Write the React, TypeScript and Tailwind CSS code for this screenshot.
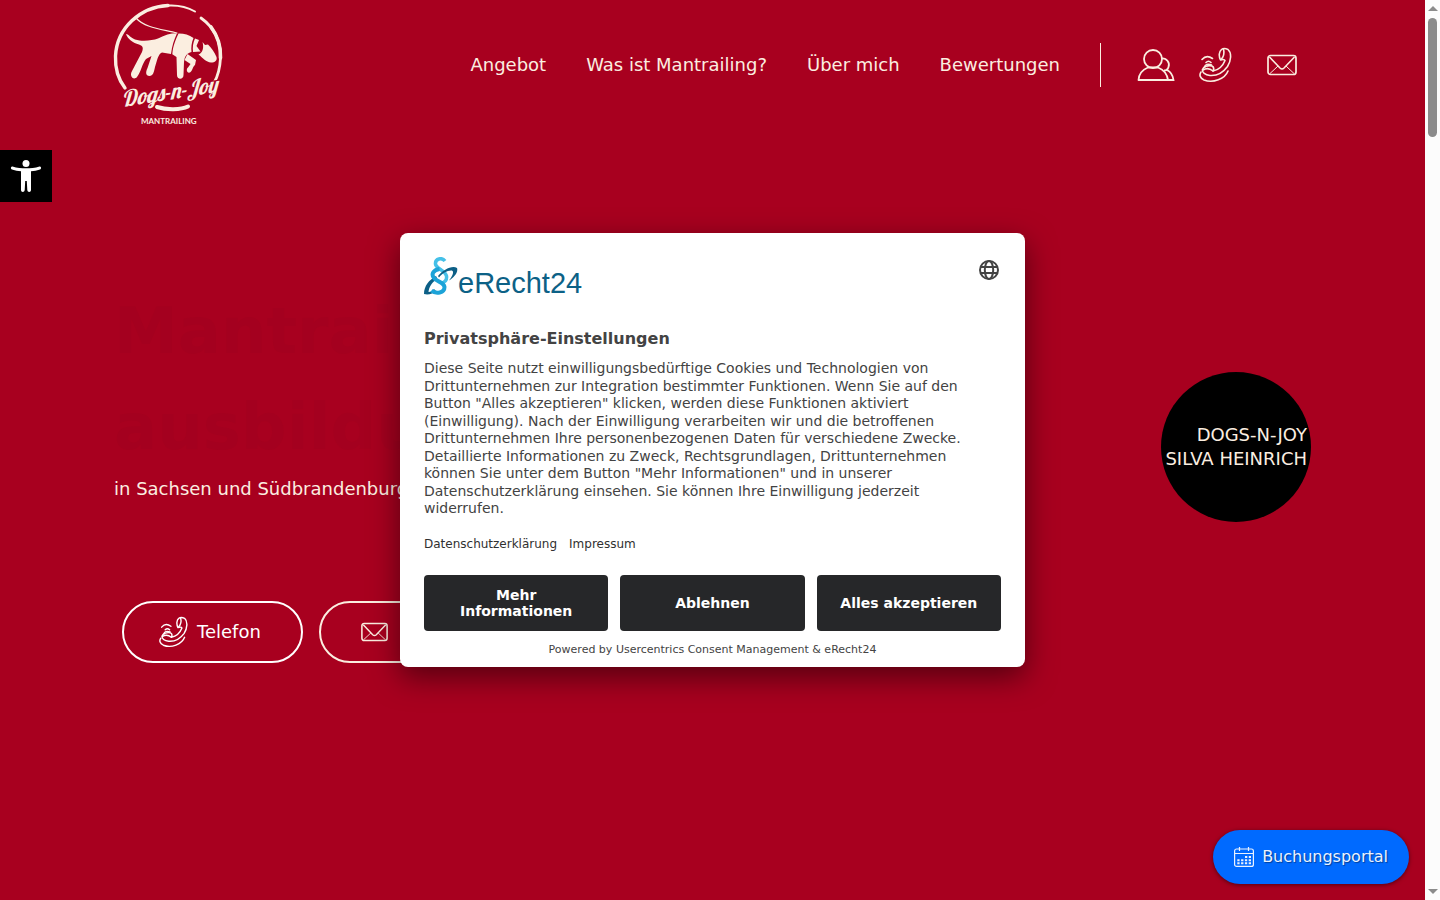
import React from 'react';

const navLinks = ['Angebot', 'Was ist Mantrailing?', 'Über mich', 'Bewertungen'];

const consentButtons = ['Mehr Informationen', 'Ablehnen', 'Alles akzeptieren'];

interface IconProps {
  className?: string;
}

const DogLogo: React.FC = () => (
  <svg viewBox="0 0 130 130" className="size-[130px] -ml-[10px]" role="img" aria-label="Dogs-n-Joy Mantrailing">
    <g fill="none" stroke="#fbeee0" strokeLinecap="round">
      <path d="M21 88C14 79 11 68 11.500 56C13 28 36 7 64 5.500" strokeWidth="3.400" />
      <path d="M64 5.500C75 4.800 84 7.500 91 11.500" strokeWidth="2" />
      <path d="M97 18C111 28 117 43 116.500 58C116 68 114 76 110 83" strokeWidth="2.800" />
      <path d="M107 27C113 35 117 46 116.500 58" strokeWidth="3.600" />
      <path d="M53 107C62 110 77 110 84 106.500" strokeWidth="4" />
      <path d="M32 18C41 28 57 29 73 33" strokeWidth="1.200" />
    </g>
    <g fill="#fbeee0">
      <path d="M22 34C25 34.500 27 38 31 39.500C39 42 48 40.500 54 38.500C61 35 66 33.300 73 33.300C70 40 68 46 67 54L58 52.500C54 54 53 61 51 67C50 72 49 76 45.500 76C41.500 76 41.500 72 43.500 68L47.500 56L42 59C38 64 37 72 33 77C30 80.500 25.500 77 27.500 72L38 52C40 47 38 45.500 35 44.500C29 43 23.500 39 22 34Z" />
      <path d="M74.500 33.600C80 33.500 85 35 89.500 38C87.500 43 87 47 87.500 52C83 53 80.500 56 80 62L79.500 75C79.500 80 73 80 73 75L72.500 57L68.300 54.300C69 46 71.500 40 74.500 33.600Z" />
      <path d="M91 38.500L95 40L92.500 46L96.500 51.500L89 52C88.500 47 89 43 91 38.500Z" />
      <path d="M83.500 54L92 60L91 65C88.500 67 88.500 71 86 72.500C82.500 73.500 82 69 84 67.500L86.500 64L80.500 60Z" />
      <path d="M98.500 42L101 45L104 44.500C107.500 48 110.500 52 112.500 57C113.500 60.500 111 62.500 107 62.500C102 62 99 58 94.500 54.500C99 53 100 47 98.500 42Z" />
    </g>
    <text
      x="19"
      y="107"
      transform="rotate(-9 19 107)"
      fill="#fbeee0"
      stroke="#a8001f"
      strokeWidth="2"
      paintOrder="stroke"
      className="font-['Brush_Script_MT','Lobster',cursive] text-[22px] italic"
    >
      Dogs-n-Joy
    </text>
    <text x="37" y="124" fill="#fbeee0" className="font-['Lato',sans-serif] text-[8px] font-bold">
      MANTRAILING
    </text>
  </svg>
);

const PersonIcon: React.FC<IconProps> = ({ className }) => (
  <svg viewBox="0 0 38 32" className={className} fill="none" stroke="currentColor" strokeWidth="1.800" aria-hidden="true">
    <circle cx="16" cy="10" r="9" />
    <path d="M1.500 31C2 24 6 20.500 11 18.500H21C26 20.500 30 24 31 31Z" strokeLinejoin="round" />
    <path d="M24.500 9.500C30 9 33 14 31.500 18C31 20 29 21.500 27 21.500M30 21C34 23 36 27 36.500 31H31" />
  </svg>
);

const PhoneIcon: React.FC<IconProps> = ({ className }) => (
  <svg
    viewBox="0 0 34 36"
    className={className}
    fill="none"
    stroke="currentColor"
    strokeWidth="1.600"
    strokeLinecap="round"
    strokeLinejoin="round"
    aria-hidden="true"
  >
    <path d="M21.500 13C19.500 9 20 4.500 22.500 2.500C24 1.300 27 1.500 29 2.500C33 6 32 14 28.500 19.500C24.500 25 18 29 11 28.500C6 28 3 25.500 3.500 22.500C4.500 19.500 9 18 13 19C15 20 15 22 14 24C19.500 23 24 18.500 26 13.500C25.500 12 23 12.500 21.500 13Z" />
    <path d="M22 12.500C24.500 10 25.500 6 24.500 2M4 23C7 21 11 21.500 14 24M5.500 20C6 17.500 9 16.500 12.500 18" />
    <path d="M2 25C0 28 1 31 5 33C14 36.500 26 32 29 24" />
    <path d="M3 12.500C6 9 10 9 13.500 11.500M7 15.500C8.500 14 10.500 14 12 15.500" />
  </svg>
);

const MailIcon: React.FC<IconProps> = ({ className }) => (
  <svg viewBox="0 0 30 22" className={className} fill="none" stroke="currentColor" strokeLinejoin="round" aria-hidden="true">
    <rect x="1" y="1.500" width="28" height="19" rx="2.500" strokeWidth="1.700" />
    <path d="M2.500 3L13 14C14.500 15.500 15.500 15.500 17 14L27.500 3" strokeWidth="1.600" />
    <path d="M3 19.500L11 12M27 19.500L19 12" strokeWidth="1" />
  </svg>
);

const AccessibilityIcon: React.FC = () => (
  <svg viewBox="0 0 32 34" className="h-[34px] w-8" fill="#fff" aria-hidden="true">
    <circle cx="16" cy="4.500" r="3.500" />
    <path d="M2.500 7.500C7 9 11.500 9.300 16 9.300S25 9 29.500 7.500C31.500 7.500 31.500 10 30 10.500C27 11.500 24 12 21 12.300V31C21 33.500 17.500 33.500 17.300 31L16.800 22H15.200L14.700 31C14.500 33.500 11 33.500 11 31V12.300C8 12 5 11.500 2 10.500C.5 10 .5 7.500 2.500 7.500Z" />
  </svg>
);

const GlobeIcon: React.FC = () => (
  <svg viewBox="0 0 24 24" className="size-6" fill="none" stroke="#434343" strokeWidth="2" aria-hidden="true">
    <circle cx="12" cy="12" r="9" />
    <ellipse cx="12" cy="12" rx="4.200" ry="9" />
    <path d="M4 9H20M4 15H20" />
  </svg>
);

const CalendarIcon: React.FC = () => (
  <svg viewBox="0 0 20 20" className="size-5" fill="none" stroke="currentColor" strokeWidth="1.200" aria-hidden="true">
    <rect x=".6" y="2" width="18.800" height="17.400" rx="2" />
    <path d="M.6 6.500H19.400M5.500 0V4M14.500 0V4" />
    <path d="M11 10H17M3.300 13.300H17M3.300 16.300H17" strokeWidth="2" strokeDasharray="2.300 1.500" />
  </svg>
);

const ERechtLogo: React.FC = () => (
  <div className="flex h-10 items-start">
    <svg viewBox="0 0 34 38" className="h-[38px] w-[34px]" fill="none" aria-hidden="true">
      <path d="M0 37C0 29 5 23 12 19L13.500 22C8 25 5 30 4.500 35C7 35 9 34 10 32L12 34C9 37 4 38 0 37Z" fill="#0c5f86" />
      <path d="M21 4C18 0 11 1.500 11.500 7C12 12 21 13 22.500 19C23 22.500 21 25 18 26" stroke="#45c0e8" strokeWidth="3.500" />
      <path d="M15.500 12C9 13 7 17.500 10 21C13 25 20 25 20.500 30C20.500 36 12 37.500 7.500 33.500" stroke="#1ca3d8" strokeWidth="4" />
      <path d="M14 19C19 13 28 8 33 11C34.500 15 30 20.500 25 23.500C30 17 30 13.500 27 13.500C23 13.500 18 16.500 15 20.500Z" fill="#0c5f86" />
    </svg>
    <span className="mt-3.5 font-['Liberation_Sans',sans-serif] text-[29px] leading-6 text-[#0c6186]">eRecht24</span>
  </div>
);

const ConsentDialog: React.FC = () => (
  <div
    role="dialog"
    aria-labelledby="consent-title"
    className="w-full max-w-[625px] rounded-lg bg-white px-6 pt-6 pb-[9px] text-[#303030] shadow-[0_10px_30px_rgba(0,0,0,0.5)]"
  >
    <div className="flex items-start justify-between">
      <ERechtLogo />
      <button type="button" aria-label="Sprache" className="mt-px">
        <GlobeIcon />
      </button>
    </div>
    <h2 id="consent-title" className="mt-8 text-base leading-5 font-bold text-[#434343]">
      Privatsphäre-Einstellungen
    </h2>
    <p className="mt-[11px] text-sm leading-tight text-[#434343]">
      Diese Seite nutzt einwilligungsbedürftige Cookies und Technologien von Drittunternehmen zur Integration
      bestimmter Funktionen. Wenn Sie auf den Button "Alles akzeptieren" klicken, werden diese Funktionen aktiviert
      (Einwilligung). Nach der Einwilligung verarbeiten wir und die betroffenen Drittunternehmen Ihre
      personenbezogenen Daten für verschiedene Zwecke. Detaillierte Informationen zu Zweck, Rechtsgrundlagen,
      Drittunternehmen können Sie unter dem Button "Mehr Informationen" und in unserer Datenschutzerklärung
      einsehen. Sie können Ihre Einwilligung jederzeit widerrufen.
    </p>
    <div className="mt-4.5 flex gap-3 text-xs leading-4">
      <a href="#datenschutz">Datenschutzerklärung</a>
      <a href="#impressum">Impressum</a>
    </div>
    <div className="mt-[23px] grid grid-cols-3 gap-3">
      {consentButtons.map((label) => (
        <button key={label} type="button" className="h-14 rounded bg-[#262729] px-5 text-sm leading-4 font-bold text-white">
          {label}
        </button>
      ))}
    </div>
    <p className="mt-[11px] text-center text-[11px] leading-4 text-[#434343]">
      Powered by <a href="#usercentrics">Usercentrics Consent Management</a> &amp; eRecht24
    </p>
  </div>
);

const Header: React.FC = () => (
  <header className="flex h-[130px] items-center justify-between">
    <a href="#start">
      <DogLogo />
    </a>
    <nav className="flex items-center gap-10 text-lg leading-6">
      {navLinks.map((label) => (
        <a key={label} href="#nav">
          {label}
        </a>
      ))}
      <div className="flex h-11 items-center border-l border-[#fbeee0] pr-3.5 pl-9">
        <a href="#konto" aria-label="Konto" className="mr-6">
          <PersonIcon className="h-8 w-[38px]" />
        </a>
        <a href="#telefon" aria-label="Telefon" className="mr-[34px]">
          <PhoneIcon className="h-9 w-[34px]" />
        </a>
        <a href="#mail" aria-label="E-Mail">
          <MailIcon className="h-[22px] w-[30px]" />
        </a>
      </div>
    </nav>
  </header>
);

const Hero: React.FC = () => (
  <section className="flex items-start justify-between pt-[153px] text-lg leading-6">
    <div>
      <h1 className="text-[64px] leading-[96px] font-bold text-[#a4001f]">
        Mantrailing-
        <br />
        ausbildung
      </h1>
      <p className="mt-0.5">in Sachsen und Südbrandenburg</p>
      <div className="mt-[100px] ml-2 flex gap-4">
        <a href="#telefon" className="flex h-[62px] items-center gap-2 rounded-full border-2 border-white pr-10 pl-[35px] text-white">
          <PhoneIcon className="h-8 w-[30px]" />
          Telefon
        </a>
        <a href="#mail" className="flex h-[62px] items-center gap-4 rounded-full border-2 border-[#fbeee0] px-10">
          <MailIcon className="h-5 w-[27px]" />
          E-Mail
        </a>
      </div>
    </div>
    <div className="mt-[89px] flex size-[150px] items-center justify-end rounded-full bg-black pr-1 text-right whitespace-nowrap">
      DOGS-N-JOY
      <br />
      SILVA HEINRICH
    </div>
  </section>
);

const Scrollbar: React.FC = () => (
  <div className="flex w-[15px] shrink-0 flex-col items-center bg-[#fcfcfc] py-1.5" aria-hidden="true">
    <svg viewBox="0 0 10 5" className="h-[5px] w-2.5" fill="#8b8b8b">
      <path d="M0 5L5 0L10 5Z" />
    </svg>
    <div className="mt-[7px] h-[119px] w-[9px] rounded-full bg-[#8b8b8b]" />
    <svg viewBox="0 0 10 5" className="mt-auto h-[5px] w-2.5" fill="#8b8b8b">
      <path d="M0 0L5 5L10 0Z" />
    </svg>
  </div>
);

export default function App() {
  return (
    <div className="flex h-screen overflow-hidden font-['DejaVu_Sans',sans-serif]">
      <main className="relative min-w-0 flex-1 bg-[#a8001f] text-[#fbeee0]">
        <div className="px-[8%]">
          <Header />
          <Hero />
        </div>

        <button
          type="button"
          aria-label="Werkzeugleiste öffnen"
          className="absolute top-[150px] left-0 flex size-[52px] items-center justify-center bg-black"
        >
          <AccessibilityIcon />
        </button>

        <a
          href="#buchung"
          className="absolute right-4 bottom-4 flex h-[54px] items-center gap-2 rounded-full bg-[#006aff] px-[21px] text-base text-[#eaf2ff] shadow-[0_1px_4px_rgba(0,0,0,0.5)] text-shadow-[1px_1px_1px_rgba(0,0,0,0.4)]"
        >
          <CalendarIcon />
          Buchungsportal
        </a>

        <div className="absolute inset-0 flex items-center justify-center">
          <ConsentDialog />
        </div>
      </main>
      <Scrollbar />
    </div>
  );
}
